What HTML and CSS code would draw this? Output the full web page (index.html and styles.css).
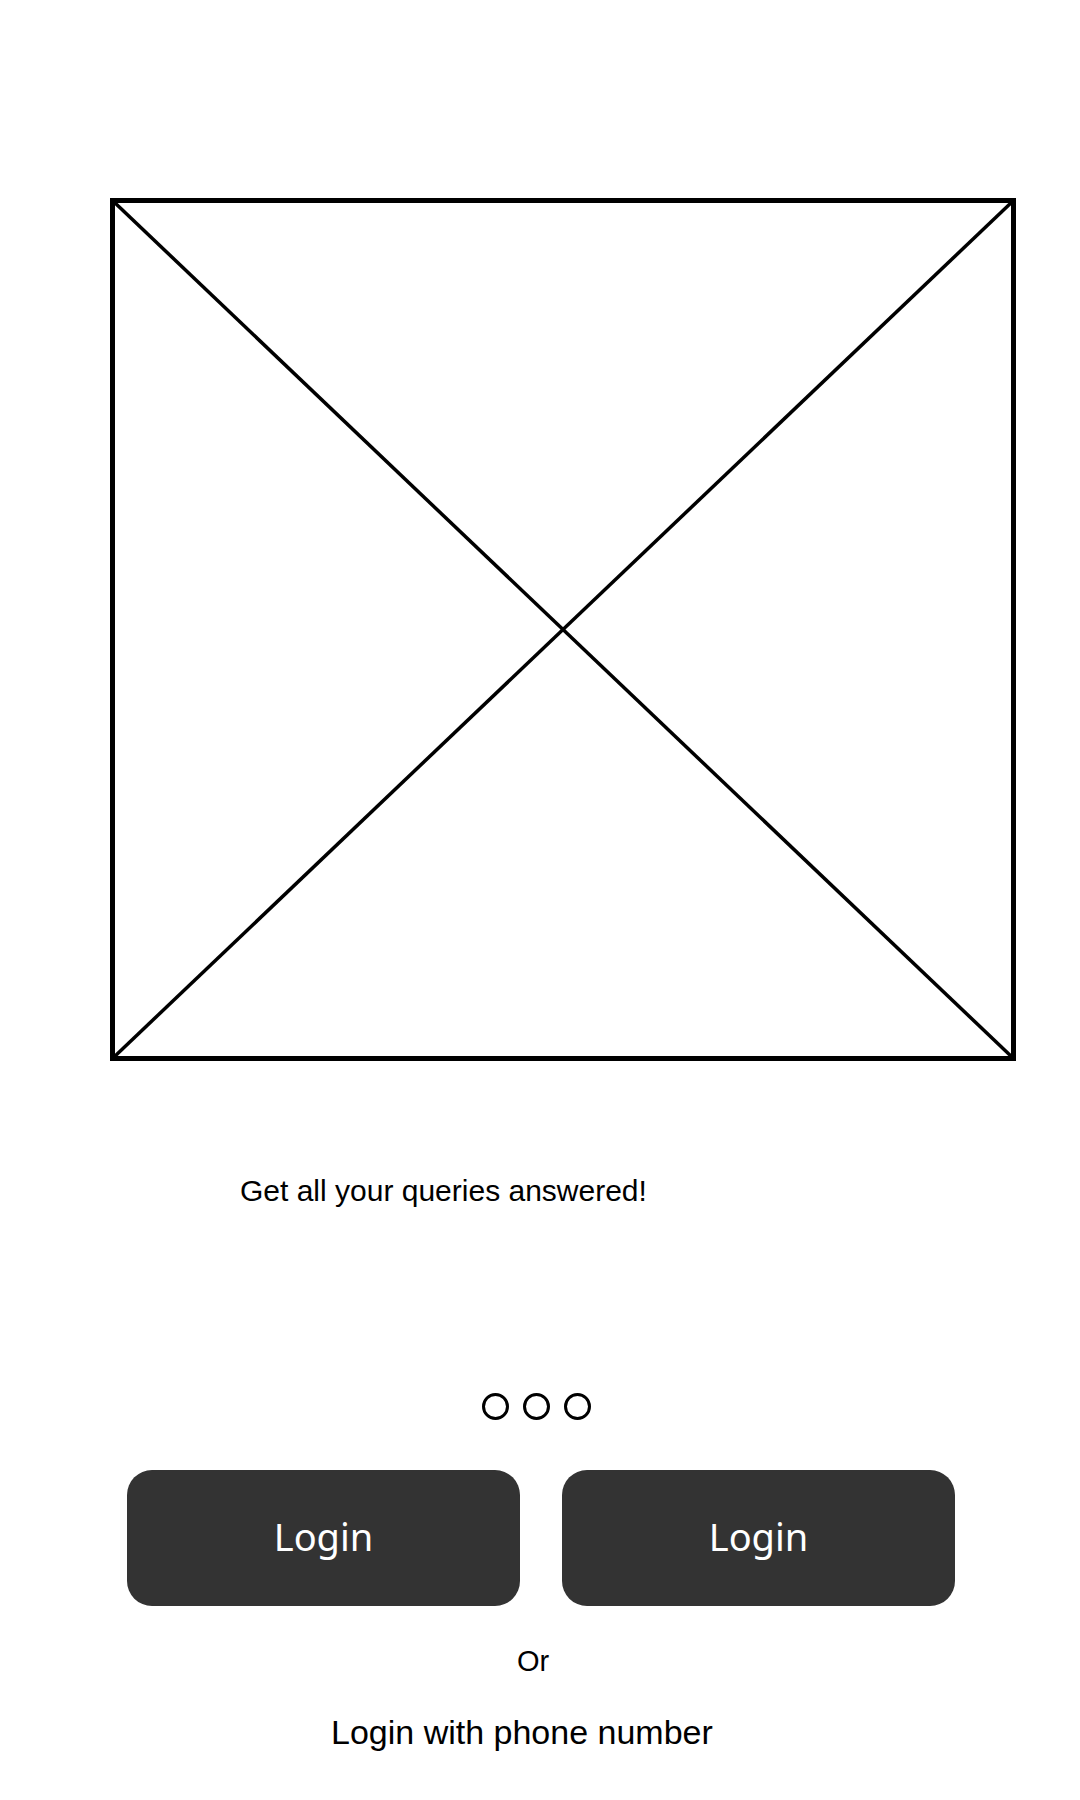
FILE: index.html
```html
<!DOCTYPE html>
<html lang="en">
<head>
    <meta charset="UTF-8">
    <meta name="viewport" content="width=device-width, initial-scale=1.0">
    <title>Welcome</title>
    <link rel="stylesheet" href="styles.css">
</head>
<body>

    <div class="screen">
        <!-- image placeholder -->
        <div class="hero">
            <svg viewBox="0 0 906 863" preserveAspectRatio="none">
                <rect x="2.5" y="2.5" width="901" height="858" fill="none" stroke="#000" stroke-width="5"/>
                <line x1="3" y1="3" x2="903" y2="860" stroke="#000" stroke-width="3.5"/>
                <line x1="903" y1="3" x2="3" y2="860" stroke="#000" stroke-width="3.5"/>
            </svg>
        </div>

        <p class="tagline">Get all your queries answered!</p>

        <div class="dots">
            <span></span>
            <span></span>
            <span></span>
        </div>

        <div class="actions">
            <button class="btn">Login</button>
            <button class="btn">Login</button>
        </div>

        <p class="or">Or</p>
        <p class="phone">Login with phone number</p>
    </div>

</body>
</html>
```

FILE: styles.css
```css
body {
    margin: 0;
    padding: 0;
    background-color: #fff;
    color: #000;
    font-family: "Liberation Sans", Arial, sans-serif;
}
.screen {
    width: 1080px;
    padding-top: 198px;
}
.hero {
    width: 906px;
    height: 863px;
    margin-left: 110px;
}
.hero svg {
    display: block;
    width: 100%;
    height: 100%;
}
.tagline {
    margin: 113px 0 0 240px;
    font-size: 30px;
    line-height: 34px;
}
.dots {
    display: flex;
    gap: 14px;
    margin-top: 185px;
    padding-left: 482px;
}
.dots span {
    width: 21px;
    height: 21px;
    border: 3px solid #000;
    border-radius: 50%;
}
.actions {
    display: flex;
    gap: 42px;
    margin-top: 50px;
    padding-left: 127px;
}
.btn {
    width: 393px;
    height: 136px;
    border: none;
    border-radius: 25px;
    background-color: #333;
    color: #fff;
    font-family: "Noto Sans", "Open Sans", sans-serif;
    font-size: 38px;
    padding: 0 0 4px;
    cursor: pointer;
}
.or {
    margin: 38px 0 0 517px;
    font-size: 29px;
    line-height: 34px;
}
.phone {
    margin: 35px 0 0 331px;
    font-size: 34px;
    line-height: 38px;
}
```
